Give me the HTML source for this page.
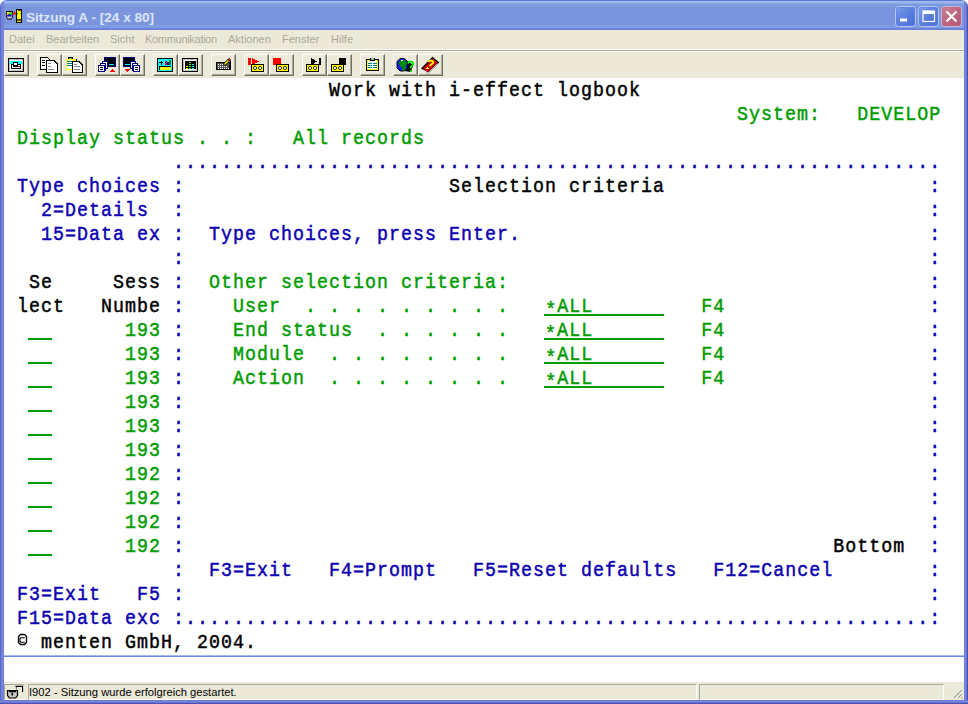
<!DOCTYPE html>
<html><head><meta charset="utf-8">
<style>
*{margin:0;padding:0;box-sizing:border-box}
html,body{width:968px;height:704px;overflow:hidden;background:#fff}
#win{position:absolute;left:0;top:0;width:968px;height:704px;border-radius:7px 7px 0 0;overflow:hidden}
#title{position:absolute;left:0;top:0;width:968px;height:30px;background:linear-gradient(#5A7CD6 0 1px,#9EB6E9 1px 3px,#8AA6E4 3px 4px,#7D9BE0 4px 7px,#7A95DE 7px 25px,#7C9EE3 25px 28px,#6E80DB 28px 30px)}
#bl{position:absolute;left:0;top:0;width:4px;height:704px;background:linear-gradient(to right,#5E66CC 0 1px,#6E80DA 1px 2px,#7589DC 2px 3px,#7080D7 3px 4px)}
#br{position:absolute;left:964px;top:0;width:4px;height:704px;background:linear-gradient(to right,#6F7AD9 0 1px,#7688DD 1px 2px,#6A74D0 2px 3px,#4A50B0 3px 4px)}
#bb{position:absolute;left:0;top:700px;width:968px;height:4px;background:linear-gradient(#6F78D8 0 1px,#7589DC 1px 2px,#6A72D3 2px 3px,#4C52B2 3px 4px)}
#ttext{position:absolute;left:26px;top:10px;font:bold 13.6px "Liberation Sans",sans-serif;color:#DCE6F8;white-space:pre}
#client{position:absolute;left:4px;top:30px;width:960px;height:670px;background:#ECE9D8}
#menu{position:absolute;left:0;top:0;width:960px;height:20px;font:11px "Liberation Sans",sans-serif;color:#ACA899}
#menu span{position:absolute;top:3px;white-space:pre}
#sep{position:absolute;left:0;top:20px;width:960px;height:1px;background:#ACA899}
#sep0{position:absolute;left:0;top:19px;width:960px;height:1px;background:#FAF9F4}
#sep2{position:absolute;left:0;top:21px;width:960px;height:1px;background:#fff}
.tb{position:absolute;top:24px;width:25px;height:22px;border-top:1px solid #fff;border-left:1px solid #fff;border-right:1px solid #716F64;border-bottom:1px solid #716F64;box-shadow:inset -1px -1px 0 #ACA899}
.tb svg{position:absolute;left:3px;top:2px}
#term{position:absolute;left:0;top:48px;width:960px;height:604px;background:#fff}
.r{position:absolute;left:0.5px;height:24px;font:21px/24px "Liberation Mono",monospace;letter-spacing:1.193px;transform:scaleX(0.87);transform-origin:0 0;-webkit-text-stroke:0.5px currentColor;white-space:pre;color:#000}
#rows{position:absolute;left:0;top:1px}
.b{color:#0C00B0}.g{color:#009C00}.k{color:#000}
.ast{position:relative;top:4px}
.ul{position:absolute;height:2px;background:#009C00}
#oia{position:absolute;left:0;top:577px;width:960px;height:2px;background:linear-gradient(#A8B8F0 0 1px,#6C84E2 1px 2px)}
#status{position:absolute;left:0;top:652px;width:960px;height:18px;background:#ECE9D8;font:11.2px "Liberation Sans",sans-serif;color:#000}
.pn{position:absolute;top:2px;height:16px;border-top:1px solid #ACA899;border-left:1px solid #ACA899;border-right:1px solid #fff;border-bottom:1px solid #fff}
</style></head><body>
<div id="win">
 <div id="title">
  <svg style="position:absolute;left:0;top:0" width="968" height="30" viewBox="0 0 968 30">
   <!-- app icon -->
   <path d="M6 11h7v6l-1.5 2.5h-4l-1.5 -2.5z" fill="#000"/>
   <path d="M6.8 12h5.4v5l-1 1.4h-3.4l-1 -1.4z" fill="#D8D4CC"/>
   <rect x="7" y="12.5" width="2" height="2.5" fill="#FFFF00"/><rect x="9" y="12.5" width="3" height="2.5" fill="#00E000"/>
   <rect x="7.6" y="13.8" width="1.2" height="1.2" fill="#f00"/>
   <path d="M7 16.5h4.8v-1.2h-1.2v-0.8h-2.4v0.8h-1.2z" fill="#0000E0"/>
   <path d="M13 15l1.5 -2.5l1.5 2" stroke="#f00" stroke-width="1.3" fill="none"/>
   <rect x="16" y="9" width="6" height="14" fill="#000"/>
   <path d="M17 10h1l0.8 1h1.4l0.8 -1h0v9.3h-4z" fill="#FFFF00"/>
   <rect x="20.2" y="10" width="0.8" height="1" fill="#f00"/>
   <rect x="17" y="13" width="1" height="1" fill="#0c0"/><rect x="20" y="13" width="1" height="1" fill="#0c0"/>
   <rect x="17" y="20.6" width="4" height="1.2" fill="#FFFF00"/>
   <!-- min -->
   <rect x="895.5" y="6.5" width="20" height="20" rx="3" fill="#5B7FDE" stroke="#B4C6F2" stroke-width="1"/>
   <rect x="896.5" y="7.5" width="18" height="18" rx="2.5" fill="url(#gb)"/>
   <rect x="900" y="18.5" width="7" height="3" fill="#fff"/>
   <!-- max -->
   <rect x="918.5" y="6.5" width="20" height="20" rx="3" fill="#5B7FDE" stroke="#B4C6F2" stroke-width="1"/>
   <rect x="919.5" y="7.5" width="18" height="18" rx="2.5" fill="url(#gb)"/>
   <rect x="923" y="11" width="11.5" height="10.5" fill="none" stroke="#fff" stroke-width="1.2"/>
   <rect x="923" y="11" width="11.5" height="3" fill="#fff"/>
   <!-- close -->
   <rect x="941.5" y="6.5" width="20" height="20" rx="3" fill="#BF6480" stroke="#C8B8D8" stroke-width="1"/>
   <rect x="942.5" y="7.5" width="18" height="18" rx="2.5" fill="url(#gr)"/>
   <path d="M946.5 11.5l10 10M956.5 11.5l-10 10" stroke="#fff" stroke-width="2.2"/>
   <defs>
    <linearGradient id="gb" x1="0" y1="0" x2="1" y2="1"><stop offset="0" stop-color="#7C9CEA"/><stop offset="0.5" stop-color="#5A7EDE"/><stop offset="1" stop-color="#4C70DA"/></linearGradient>
    <linearGradient id="gr" x1="0" y1="0" x2="1" y2="1"><stop offset="0" stop-color="#CC8296"/><stop offset="0.5" stop-color="#BF6480"/><stop offset="1" stop-color="#B45674"/></linearGradient>
   </defs>
  </svg>
  <div id="ttext">Sitzung A - [24 x 80]</div>
 </div>
 <div id="bl"></div><div id="br"></div><div id="bb"></div>
 <div id="client">
  <div id="menu"><span style="left:5px">Datei</span><span style="left:42px">Bearbeiten</span><span style="left:106px">Sicht</span><span style="left:141px;letter-spacing:-0.3px">Kommunikation</span><span style="left:224px">Aktionen</span><span style="left:278px">Fenster</span><span style="left:327px">Hilfe</span></div>
  <div id="sep0"></div><div id="sep"></div><div id="sep2"></div>
  <div class="tb" style="left:0px"></div>
<div class="tb" style="left:33px"></div>
<div class="tb" style="left:58px"></div>
<div class="tb" style="left:91px"></div>
<div class="tb" style="left:116px"></div>
<div class="tb" style="left:149px"></div>
<div class="tb" style="left:174px"></div>
<div class="tb" style="left:207px"></div>
<div class="tb" style="left:240px"></div>
<div class="tb" style="left:265px"></div>
<div class="tb" style="left:298px"></div>
<div class="tb" style="left:323px"></div>
<div class="tb" style="left:356px"></div>
<div class="tb" style="left:389px"></div>
<div class="tb" style="left:414px"></div>
<svg id="icons" width="968" height="80" viewBox="0 0 968 80" style="position:absolute;left:-4px;top:-30px" shape-rendering="crispEdges">
<!-- icon1 -->
<rect x="8.5" y="58.5" width="15" height="13" rx="1.5" fill="#C0C0C0" stroke="#000" stroke-width="1.3"/>
<rect x="10" y="60" width="12" height="10" fill="#fff"/>
<rect x="10" y="60.5" width="11.5" height="3.5" fill="#00FFFF"/>
<rect x="11.5" y="64.5" width="9" height="4" fill="#fff" stroke="#000" stroke-width="1.2"/>
<rect x="13.5" y="62.5" width="4" height="3.5" fill="#fff" stroke="#000" stroke-width="1.2"/>
<rect x="18" y="66" width="2" height="1" fill="#f00"/>
<!-- icon2 copy -->
<path d="M40.5 57.5h7l2 2v10h-9z" fill="#fff" stroke="#000" stroke-width="1.2"/>
<rect x="42" y="60" width="3" height="1" fill="#000"/><rect x="42" y="62" width="3" height="1" fill="#000"/><rect x="42" y="65" width="3" height="1" fill="#000"/>
<path d="M46.5 60.5h7.5l3.5 3.5v8.5h-11z" fill="#fff" stroke="#000" stroke-width="1.2"/>
<rect x="48" y="62.5" width="3" height="1" fill="#888"/><rect x="48" y="65.5" width="3" height="1" fill="#888"/><rect x="48" y="68.5" width="6" height="1" fill="#888"/>
<!-- icon3 paste -->
<rect x="65.5" y="58.5" width="11" height="11.5" fill="#000"/>
<rect x="66" y="59" width="10" height="10.5" fill="#FFFF00"/>
<rect x="67" y="60" width="6" height="9" fill="#fff"/>
<rect x="67" y="61" width="6" height="1.2" fill="#008080"/><rect x="67" y="63" width="6" height="1.2" fill="#008080"/><rect x="67" y="65" width="6" height="1.2" fill="#008080"/>
<rect x="68" y="57" width="5" height="2" fill="#000"/><rect x="69" y="57.5" width="3" height="1.5" fill="#888"/>
<path d="M72.5 61.5h6.5l3.5 3.5v7.5h-10z" fill="#fff" stroke="#000" stroke-width="1.2"/>
<rect x="74" y="63.5" width="3" height="1" fill="#888"/><rect x="74" y="66" width="6" height="1" fill="#888"/><rect x="74" y="68.5" width="6" height="1" fill="#888"/>
<!-- icon4 -->
<rect x="104.5" y="57.5" width="11" height="9" rx="1" fill="#000" stroke="#000080" stroke-width="1"/>
<rect x="109" y="64" width="5" height="1.2" fill="#00FFFF"/>
<path d="M102.5 61.5h5v7h-5z" fill="#fff" stroke="#000080" stroke-width="1.2"/>
<path d="M100.5 63.5h5v7h-5z" fill="#fff" stroke="#000080" stroke-width="1.2"/>
<path d="M98.5 65.5h6v6h-6z" fill="#fff" stroke="#000080" stroke-width="1.4"/>
<rect x="100" y="67" width="3" height="1" fill="#000"/><rect x="100" y="69" width="3" height="1" fill="#000"/>
<path d="M109 72h6l-3 -3z" fill="#f00"/>
<!-- icon5 -->
<rect x="123.5" y="57.5" width="11" height="9" rx="1" fill="#000" stroke="#000080" stroke-width="1"/>
<rect x="124.5" y="64" width="5" height="1.2" fill="#00FFFF"/>
<path d="M130.5 61.5h5v7h-5z" fill="#fff" stroke="#000080" stroke-width="1.2"/>
<path d="M132.5 63.5h5v7h-5z" fill="#fff" stroke="#000080" stroke-width="1.2"/>
<path d="M133.5 65.5h6v6h-6z" fill="#fff" stroke="#000080" stroke-width="1.4"/>
<rect x="135" y="67" width="3" height="1" fill="#000"/><rect x="135" y="69" width="3" height="1" fill="#000"/>
<path d="M124 69h6l-3 3z" fill="#f00"/>
<!-- icon6 -->
<rect x="157.5" y="58.5" width="15" height="13" rx="1.5" fill="#00FFFF" stroke="#000" stroke-width="1.4"/>
<rect x="159" y="62" width="4" height="1.2" fill="#000"/><rect x="160.5" y="60.5" width="1.2" height="4" fill="#000"/>
<rect x="165" y="61" width="2" height="4" fill="#f00"/><rect x="167" y="62" width="2" height="3" fill="#00f"/><rect x="169" y="60" width="2" height="5" fill="#008000"/>
<rect x="159" y="66" width="12" height="4" fill="#000"/><rect x="159.5" y="67" width="11" height="2.5" fill="#FFFF00"/>
<!-- icon7 -->
<rect x="182.5" y="58.5" width="15" height="13" rx="1.5" fill="#C0C0C0" stroke="#000" stroke-width="1.4"/>
<rect x="184" y="60" width="12" height="10" fill="#fff"/>
<rect x="184.5" y="60.5" width="11" height="8" fill="#000"/>
<rect x="189" y="62" width="2" height="1" fill="#00ff00"/><rect x="189" y="64" width="2" height="1" fill="#00ff00"/><rect x="189" y="66" width="2" height="1" fill="#00ff00"/><rect x="189" y="68" width="2" height="1" fill="#00ff00"/>
<rect x="192" y="64" width="2" height="1" fill="#00ffff"/><rect x="192" y="66" width="2" height="1" fill="#00ffff"/><rect x="192" y="68" width="2" height="1" fill="#00ffff"/>
<rect x="186" y="66" width="2" height="1" fill="#ffff00"/><rect x="186" y="68" width="2" height="1" fill="#ffff00"/>
<!-- icon8 keyboard -->
<path d="M216 62h12l3 -1v9h-15z" fill="#000"/>
<rect x="217" y="63" width="12" height="6" fill="#555"/>
<rect x="217.5" y="63.5" width="1" height="1" fill="#fff"/><rect x="219.5" y="63.5" width="1" height="1" fill="#fff"/><rect x="221.5" y="63.5" width="1" height="1" fill="#fff"/>
<rect x="217.5" y="65.5" width="1" height="1" fill="#fff"/><rect x="219.5" y="65.5" width="1" height="1" fill="#fff"/><rect x="221.5" y="65.5" width="1" height="1" fill="#fff"/><rect x="223.5" y="65.5" width="1" height="1" fill="#fff"/><rect x="225.5" y="65.5" width="1" height="1" fill="#fff"/>
<rect x="217.5" y="67.5" width="1" height="1" fill="#fff"/><rect x="219.5" y="67.5" width="1" height="1" fill="#fff"/><rect x="221.5" y="67.5" width="1" height="1" fill="#fff"/><rect x="223.5" y="67.5" width="1" height="1" fill="#fff"/><rect x="225.5" y="67.5" width="1" height="1" fill="#fff"/><rect x="227.5" y="67.5" width="1" height="1" fill="#fff"/>
<path d="M224 65l6 -6" stroke="#000" stroke-width="3" shape-rendering="auto"/>
<path d="M224.5 64.5l4 -4" stroke="#FFFF00" stroke-width="1.5" shape-rendering="auto"/>
<path d="M228.5 60.5l1.5 -1.5" stroke="#f00" stroke-width="1.5" shape-rendering="auto"/>
<!-- icon9 -->
<rect x="248" y="58" width="2.5" height="7" fill="#f00"/>
<path d="M252 58v7l7 -3.5z" fill="#f00"/>
<rect x="251" y="64" width="13" height="8" rx="1" fill="#000"/>
<rect x="252" y="65" width="11" height="6" fill="#FFFF00"/>
<circle cx="255" cy="68" r="1.6" fill="#fff" stroke="#000" stroke-width="0.8" shape-rendering="auto"/>
<circle cx="260" cy="68" r="1.6" fill="#fff" stroke="#000" stroke-width="0.8" shape-rendering="auto"/>
<!-- icon10 -->
<rect x="273" y="58" width="8" height="7" fill="#f00"/>
<rect x="276" y="64" width="13" height="8" rx="1" fill="#000"/>
<rect x="277" y="65" width="11" height="6" fill="#FFFF00"/>
<circle cx="280" cy="68" r="1.6" fill="#fff" stroke="#000" stroke-width="0.8" shape-rendering="auto"/>
<circle cx="285" cy="68" r="1.6" fill="#fff" stroke="#000" stroke-width="0.8" shape-rendering="auto"/>
<!-- icon11 -->
<path d="M311 58v7l6 -3.5z" fill="#000"/>
<rect x="319" y="58" width="2" height="7" fill="#000"/>
<rect x="306" y="64" width="13" height="8" rx="1" fill="#000"/>
<rect x="307" y="65" width="11" height="6" fill="#FFFF00"/>
<circle cx="310" cy="68" r="1.6" fill="#fff" stroke="#000" stroke-width="0.8" shape-rendering="auto"/>
<circle cx="315" cy="68" r="1.6" fill="#fff" stroke="#000" stroke-width="0.8" shape-rendering="auto"/>
<!-- icon12 -->
<rect x="339" y="58" width="7" height="7" fill="#000"/>
<rect x="331" y="64" width="13" height="8" rx="1" fill="#000"/>
<rect x="332" y="65" width="11" height="6" fill="#FFFF00"/>
<circle cx="335" cy="68" r="1.6" fill="#fff" stroke="#000" stroke-width="0.8" shape-rendering="auto"/>
<circle cx="340" cy="68" r="1.6" fill="#fff" stroke="#000" stroke-width="0.8" shape-rendering="auto"/>
<!-- icon13 clipboard -->
<rect x="366" y="59" width="13" height="12" fill="#000"/>
<rect x="367" y="60" width="11" height="10" fill="#FFFF00"/>
<rect x="368" y="61" width="9" height="8" fill="#fff"/>
<rect x="368" y="62.5" width="9" height="1.2" fill="#008080"/><rect x="368" y="64.7" width="9" height="1.2" fill="#008080"/><rect x="368" y="67" width="9" height="1.2" fill="#008080"/>
<rect x="371.5" y="62" width="1" height="7" fill="#fff"/>
<rect x="370" y="57.5" width="5" height="3" fill="#000"/><rect x="371" y="58" width="3" height="2" fill="#aaa"/>
<!-- icon14 globe -->
<path d="M404 59l9.5 6l-3 7l-6 -1z" fill="#000" shape-rendering="auto"/>
<path d="M400 58.5h4.5l3 3v6.5l-3 3h-4.5l-3 -3v-6.5z" fill="#1A22E8" stroke="#000" stroke-width="0.9" shape-rendering="auto"/>
<path d="M400.5 60h4l2 2v3l-1.5 1.5l1 2.5l-1.5 1.5h-2l-0.5 -3l-2.5 -1.5l-1 -2.5z" fill="#008A00" shape-rendering="auto"/>
<path d="M398.5 63l1.5 1v2l-1.5 -1z" fill="#1A22E8"/>
<rect x="400.5" y="59.5" width="2" height="1.5" fill="#E8E8E8"/>
<path d="M408.2 63.8c0 -3 5 -3 5 0c0 1.8 -2.5 2 -2.5 3.6v1" stroke="#00F000" stroke-width="1.8" fill="none" shape-rendering="auto"/>
<rect x="409.8" y="70" width="1.8" height="2" fill="#00F000"/>
<!-- icon15 book -->
<path d="M422 68.5l10.5 -11l6 5l-10.5 10.5z" fill="#D00000" stroke="#000" stroke-width="1.2" shape-rendering="auto"/>
<path d="M422.8 69.8l5.5 3.2l9.5 -9.5" stroke="#fff" stroke-width="1" fill="none" shape-rendering="auto"/>
<path d="M428.5 62c1 -1.5 3.5 -2 4.5 -0.5c0.8 1.2 -0.5 2.3 -1.8 3l-1.5 1.5" stroke="#FFFF00" stroke-width="1.9" fill="none" shape-rendering="auto"/>
<rect x="426.3" y="67.2" width="2.2" height="2" fill="#FFFF00" transform="rotate(-40 427.4 68.2)"/>
</svg>
  <div id="term"><div id="rows">
<div class="r" style="top:0px">                           <span class="k">Work with i-effect logbook</span></div>
<div class="r" style="top:24px">                                                             <span class="g">System:</span>   <span class="g">DEVELOP</span></div>
<div class="r" style="top:48px"> <span class="g">Display status . . :   All records</span></div>
<div class="r" style="top:72px">              <span class="b">................................................................</span></div>
<div class="r" style="top:96px"> <span class="b">Type choices</span> <span class="b">:</span>                      <span class="k">Selection criteria</span>                      <span class="b">:</span></div>
<div class="r" style="top:120px">   <span class="b">2=Details</span>  <span class="b">:</span>                                                              <span class="b">:</span></div>
<div class="r" style="top:144px">   <span class="b">15=Data ex</span> <span class="b">:</span>  <span class="b">Type choices, press Enter.</span>                                  <span class="b">:</span></div>
<div class="r" style="top:168px">              <span class="b">:</span>                                                              <span class="b">:</span></div>
<div class="r" style="top:192px">  <span class="k">Se</span>     <span class="k">Sess</span> <span class="b">:</span>  <span class="g">Other selection criteria:</span>                                   <span class="b">:</span></div>
<div class="ul" style="top:235px;left:540px;width:120px"></div>
<div class="r" style="top:216px"> <span class="k">lect</span>   <span class="k">Numbe</span> <span class="b">:</span>    <span class="g">User</span>  <span class="g">. . . . . . . . .</span>   <span class="g"><span class="ast">*</span>ALL      </span>   <span class="g">F4</span>                 <span class="b">:</span></div>
<div class="ul" style="top:259px;left:540px;width:120px"></div>
<div class="ul" style="top:259px;left:24px;width:24px"></div>
<div class="r" style="top:240px">  <span class="g">  </span>      <span class="g">193</span> <span class="b">:</span>    <span class="g">End status</span>  <span class="g">. . . . . .</span>   <span class="g"><span class="ast">*</span>ALL      </span>   <span class="g">F4</span>                 <span class="b">:</span></div>
<div class="ul" style="top:283px;left:540px;width:120px"></div>
<div class="ul" style="top:283px;left:24px;width:24px"></div>
<div class="r" style="top:264px">  <span class="g">  </span>      <span class="g">193</span> <span class="b">:</span>    <span class="g">Module</span>  <span class="g">. . . . . . . .</span>   <span class="g"><span class="ast">*</span>ALL      </span>   <span class="g">F4</span>                 <span class="b">:</span></div>
<div class="ul" style="top:307px;left:540px;width:120px"></div>
<div class="ul" style="top:307px;left:24px;width:24px"></div>
<div class="r" style="top:288px">  <span class="g">  </span>      <span class="g">193</span> <span class="b">:</span>    <span class="g">Action</span>  <span class="g">. . . . . . . .</span>   <span class="g"><span class="ast">*</span>ALL      </span>   <span class="g">F4</span>                 <span class="b">:</span></div>
<div class="ul" style="top:331px;left:24px;width:24px"></div>
<div class="r" style="top:312px">  <span class="g">  </span>      <span class="g">193</span> <span class="b">:</span>                                                              <span class="b">:</span></div>
<div class="ul" style="top:355px;left:24px;width:24px"></div>
<div class="r" style="top:336px">  <span class="g">  </span>      <span class="g">193</span> <span class="b">:</span>                                                              <span class="b">:</span></div>
<div class="ul" style="top:379px;left:24px;width:24px"></div>
<div class="r" style="top:360px">  <span class="g">  </span>      <span class="g">193</span> <span class="b">:</span>                                                              <span class="b">:</span></div>
<div class="ul" style="top:403px;left:24px;width:24px"></div>
<div class="r" style="top:384px">  <span class="g">  </span>      <span class="g">192</span> <span class="b">:</span>                                                              <span class="b">:</span></div>
<div class="ul" style="top:427px;left:24px;width:24px"></div>
<div class="r" style="top:408px">  <span class="g">  </span>      <span class="g">192</span> <span class="b">:</span>                                                              <span class="b">:</span></div>
<div class="ul" style="top:451px;left:24px;width:24px"></div>
<div class="r" style="top:432px">  <span class="g">  </span>      <span class="g">192</span> <span class="b">:</span>                                                              <span class="b">:</span></div>
<div class="ul" style="top:475px;left:24px;width:24px"></div>
<div class="r" style="top:456px">  <span class="g">  </span>      <span class="g">192</span> <span class="b">:</span>                                                      <span class="k">Bottom</span>  <span class="b">:</span></div>
<div class="r" style="top:480px">              <span class="b">:</span>  <span class="b">F3=Exit</span>   <span class="b">F4=Prompt</span>   <span class="b">F5=Reset defaults</span>   <span class="b">F12=Cancel</span>        <span class="b">:</span></div>
<div class="r" style="top:504px"> <span class="b">F3=Exit   F5</span> <span class="b">:</span>                                                              <span class="b">:</span></div>
<div class="r" style="top:528px"> <span class="b">F15=Data exc</span> <span class="b">:..............................................................:</span></div>
<div class="r" style="top:552px">   <span class="k">menten GmbH, 2004.</span></div>
  </div>
  <div id="oia"></div>
  </div>
  <div id="status">
   <div class="pn" style="left:0;width:21px;border-right-color:#ECE9D8"></div>
   <div class="pn" style="left:24px;width:669px"><span style="position:absolute;left:0px;top:1px">I902 - Sitzung wurde erfolgreich gestartet.</span></div>
   <div class="pn" style="left:695px;width:245px"></div>
   <svg style="position:absolute;left:-4px;top:-682px" width="968" height="704" viewBox="0 0 968 704">
    <path d="M16 692v-5.5h6.5v5.5" fill="none" stroke="#000" stroke-width="1.3"/>
    <path d="M15.5 692v-5h-1M17 691v-3.5h4.5v3.5" fill="none" stroke="#fff" stroke-width="0.8"/>
    <path d="M7.5 690.5h10v5l-2 2.5h-6l-2 -2.5z" fill="#C4C4C4" stroke="#000" stroke-width="1.2"/>
    <rect x="9" y="691" width="7" height="1.2" fill="#000"/>
    <rect x="11.5" y="692.5" width="1.5" height="3" fill="#000"/>
    <path d="M962 690l-8 8M962 694l-4 4" stroke="#ACA899" stroke-width="1.2"/>
    <path d="M963 691l-8 8M963 695l-4 4" stroke="#fff" stroke-width="0.8"/>
    <rect x="961" y="697" width="1.5" height="1.5" fill="#ACA899"/>
   </svg>
  </div>
 </div>
</div>
<svg style="position:absolute;left:0;top:620px" width="40" height="30" viewBox="0 620 40 30"><path d="M20.5 634.5h4l2 2v6l-2 2h-4l-2 -2v-6z" fill="none" stroke="#000" stroke-width="1.3"/><path d="M24.8 637.8h-4l-0.8 0.8v2.8l0.8 0.8h4" fill="none" stroke="#000" stroke-width="1.1"/></svg>
</body></html>
